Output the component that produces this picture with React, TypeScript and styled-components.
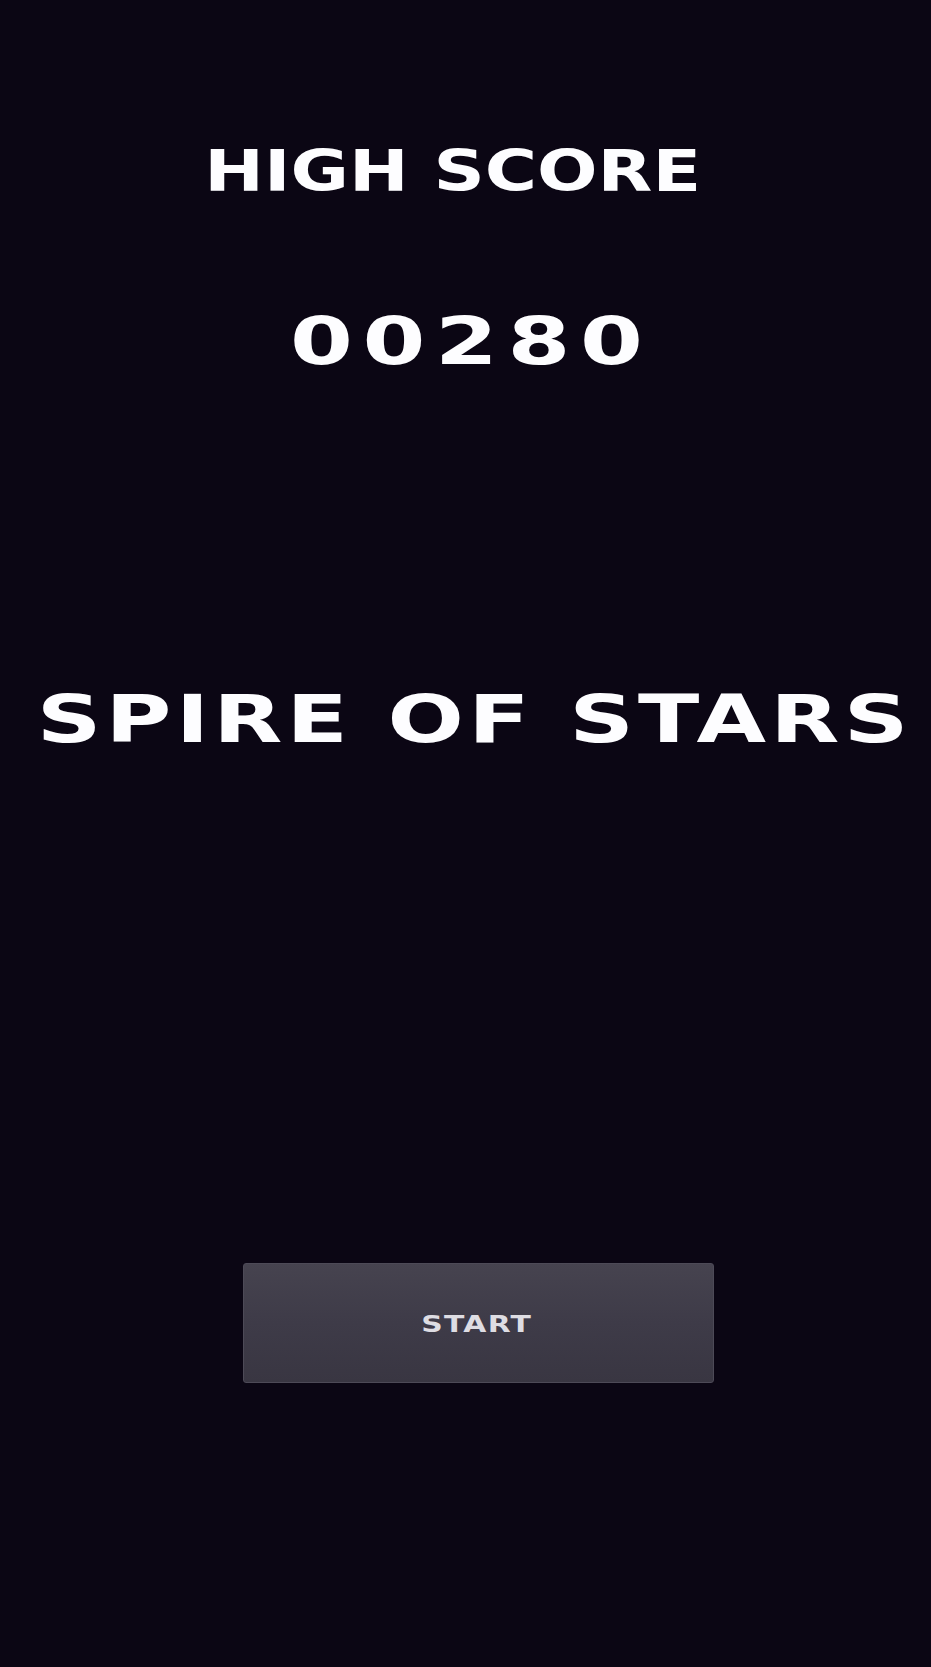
import styled, { createGlobalStyle } from 'styled-components'

const GlobalStyle = createGlobalStyle`
  html, body {
    margin: 0;
    padding: 0;
    background: #0b0614;
  }
  body {
    font-family: 'DejaVu Sans', 'Liberation Sans', sans-serif;
  }
`

const Screen = styled.main`
  min-height: 100vh;
  box-sizing: border-box;
  display: flex;
  flex-direction: column;
  align-items: center;
  padding-top: 143px;
  background: #0b0614;
  color: #ffffff;
`

type GlyphProps = {
  $size: number
  $spacing: number
  $stretch: number
  $gap?: number
  $nudge?: number
}

// the centre of each line sits a little off the page centre in the original
const DisplayText = styled.h1<GlyphProps>`
  margin: ${(p) => p.$gap ?? 0}px 0 0 ${(p) => (p.$nudge ?? 0) * 2}px;
  font-size: ${(p) => p.$size}px;
  line-height: 1;
  font-weight: 700;
  letter-spacing: ${(p) => p.$spacing}px;
  white-space: nowrap;
  transform: scaleX(${(p) => p.$stretch});
  transform-origin: center;
  color: #fdfdff;
`

const StartButton = styled.button`
  margin: 511px 0 0 25px;
  width: 471px;
  height: 120px;
  display: flex;
  align-items: center;
  justify-content: center;
  border: 1px solid #4d4a57;
  border-radius: 3px;
  background: linear-gradient(180deg, #46434f 0%, #3e3b48 50%, #393642 100%);
  cursor: pointer;
  padding: 0;
`

const ButtonLabel = styled.span`
  font-family: 'DejaVu Sans', 'Liberation Sans', sans-serif;
  font-size: 23.5px;
  font-weight: 700;
  letter-spacing: 1px;
  color: #dedde3;
  transform: scaleX(1.27);
  display: inline-block;
  margin: 2px 3px 0 0;
`

export default function App() {
  return (
    <>
      <GlobalStyle />
      <Screen>
        <DisplayText as="h2" $size={57} $spacing={0} $stretch={1.25} $nudge={-13}>
          HIGH SCORE
        </DisplayText>
        <DisplayText as="div" $size={66} $spacing={7} $stretch={1.37} $gap={109} $nudge={5.5}>
          00280
        </DisplayText>
        <DisplayText $size={65} $spacing={3} $stretch={1.383} $gap={312} $nudge={9.5}>
          SPIRE OF STARS
        </DisplayText>
        <StartButton type="button">
          <ButtonLabel>START</ButtonLabel>
        </StartButton>
      </Screen>
    </>
  )
}
